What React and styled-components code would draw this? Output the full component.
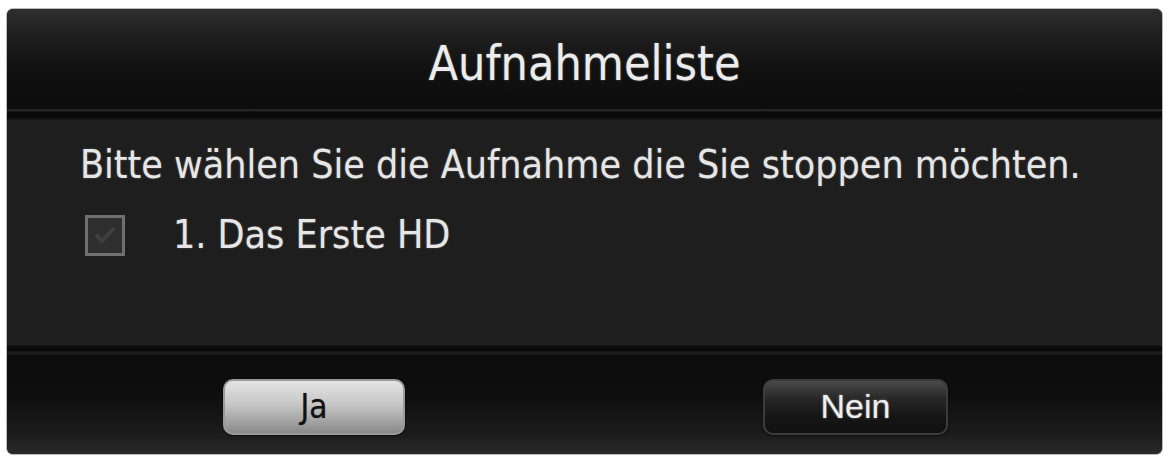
import React from "react";
import styled, { createGlobalStyle } from "styled-components";

const GlobalStyle = createGlobalStyle`
  html, body {
    margin: 0;
    padding: 0;
    background: #ffffff;
  }
  body {
    font-family: "DejaVu Sans Condensed", "DejaVu Sans", sans-serif;
  }
`;

const Page = styled.div`
  padding: 9px 5px 3px 7px;
  width: 1167px;
  height: 457px;
  box-sizing: border-box;
`;

const Dialog = styled.div`
  display: flex;
  flex-direction: column;
  height: 100%;
  border-radius: 6px;
  overflow: hidden;
  background: #1e1e1e;
  box-shadow: 0 0 0 1px #b9b9b9;
`;

const Header = styled.div`
  height: 100px;
  box-sizing: border-box;
  padding-top: 7px;
  display: flex;
  align-items: center;
  justify-content: center;
  background: linear-gradient(
    to bottom,
    #2e2e2e 0%,
    #1f1f1f 25%,
    #111111 60%,
    #0c0c0c 100%
  );
  color: #ececec;
  font-size: 48px;
  text-shadow: 0 0 2px rgba(255, 255, 255, 0.35);
`;

const Rule = styled.div`
  height: 11px;
  background: linear-gradient(
    to bottom,
    #242424 0px,
    #242424 2px,
    #0a0a0a 3px,
    #0a0a0a 8px,
    #181818 11px
  );
`;

const Body = styled.div`
  flex: 1;
  display: flex;
  flex-direction: column;
  gap: 22px;
  padding: 21px 0 0 73px;
  color: #e6e6e6;
  font-size: 39px;
  text-shadow: 0 0 2px rgba(255, 255, 255, 0.3);
`;

const Line = styled.div`
  line-height: 48px;
`;

const Item = styled.div`
  display: flex;
  align-items: center;
  gap: 48px;
  line-height: 48px;
  padding-left: 5px;
`;

const Check = styled.div`
  width: 34px;
  height: 35px;
  border: 3px solid #6f6f6f;
  background: #2e2e2e;
  display: flex;
  align-items: center;
  justify-content: center;
`;

const FooterRule = styled.div`
  height: 10px;
  background: linear-gradient(
    to bottom,
    #141414 0px,
    #080808 4px,
    #0a0a0a 6px,
    #202020 7px,
    #121212 10px
  );
`;

const Footer = styled.div`
  height: 99px;
  box-sizing: border-box;
  padding: 4px 214px 0 216px;
  display: flex;
  align-items: center;
  justify-content: space-between;
  background: linear-gradient(
    to bottom,
    #0c0c0c 0%,
    #0e0e0e 40%,
    #1c1c1c 80%,
    #2a2a2a 100%
  );
`;

const Button = styled.div`
  width: ${(p) => p.$w}px;
  height: 56px;
  box-sizing: border-box;
  border-radius: 10px;
  display: flex;
  align-items: center;
  justify-content: center;
  font-family: ${(p) =>
    p.$light ? '"DejaVu Sans Condensed", sans-serif' : '"Liberation Sans", sans-serif'};
  font-size: ${(p) => (p.$light ? 33 : 34)}px;
  color: ${(p) => (p.$light ? "#121212" : "#eeeeee")};
  background: ${(p) =>
    p.$light
      ? "linear-gradient(to bottom, #e4e4e4 0%, #c6c6c6 45%, #a0a0a0 80%, #8a8a8a 100%)"
      : "linear-gradient(to bottom, #4a4a4a 0%, #262626 35%, #151515 70%, #111 100%)"};
  border: 2px solid ${(p) => (p.$light ? "#9a9a9a" : "#3c3c3c")};
  text-shadow: ${(p) =>
    p.$light ? "0 0 1px rgba(0,0,0,0.5)" : "0 0 2px rgba(255,255,255,0.5)"};
  box-shadow: 0 1px 2px rgba(0, 0, 0, 0.6);
`;

export default function App() {
  return (
    <>
      <GlobalStyle />
      <Page>
        <Dialog>
          <Header>Aufnahmeliste</Header>
          <Rule />
          <Body>
            <Line>Bitte wählen Sie die Aufnahme die Sie stoppen möchten.</Line>
            <Item>
              <Check>
                <svg width="24" height="22" viewBox="0 0 24 22">
                  <path
                    d="M3 11 L9 17 L21 4"
                    fill="none"
                    stroke="#3f3f3f"
                    strokeWidth="4"
                  />
                </svg>
              </Check>
              <span>1. Das Erste HD</span>
            </Item>
          </Body>
          <FooterRule />
          <Footer>
            <Button $light $w={182}>Ja</Button>
            <Button $w={185}>Nein</Button>
          </Footer>
        </Dialog>
      </Page>
    </>
  );
}
